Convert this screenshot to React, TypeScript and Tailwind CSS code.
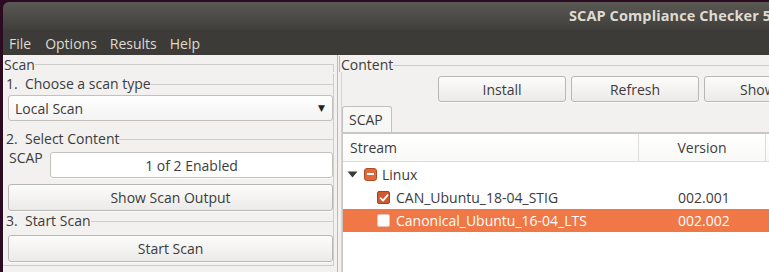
import React from 'react'

const font = { fontFamily: '"Open Sans", "DejaVu Sans", sans-serif' }

const btn =
  'flex items-center justify-center rounded-[3px] border border-[#b9b7b3] bg-gradient-to-b from-[#fcfcfb] to-[#ebeae8] text-[#3c3c3c] shadow-[0_1px_0_rgba(255,255,255,0.8)]'

function Section({ label }: { label: string }) {
  return (
    <div className="flex items-center h-[18px] pl-[3px]">
      <span className="whitespace-pre text-[#3c3c3c]">{label}</span>
      <div className="flex-1 border-t border-[#cfcdc9] mt-[2px]" />
    </div>
  )
}

function CheckOn() {
  return (
    <span className="w-[13px] h-[13px] rounded-[2px] bg-[#cf5a2f] border border-[#a8431e] flex items-center justify-center">
      <svg width="10" height="10" viewBox="0 0 10 10">
        <path d="M1.5 5.2 L4 7.6 L8.6 2.2" stroke="#fff" strokeWidth="1.8" fill="none" strokeLinecap="round" strokeLinejoin="round" />
      </svg>
    </span>
  )
}

function CheckPartial() {
  return (
    <span className="w-[13px] h-[13px] rounded-[3px] bg-[#dd6a3d] border border-[#b04a22] flex items-center justify-center">
      <span className="w-[7px] h-[2px] bg-white" />
    </span>
  )
}

function CheckOff() {
  return <span className="w-[13px] h-[13px] rounded-[2px] bg-[#fbfbfb] border border-[#e8c2b0]" />
}

export default function App() {
  return (
    <div className="w-[769px] h-[272px] flex bg-[#2c0a22] overflow-hidden text-[14px]" style={font}>
      <div className="w-[3px] shrink-0" />
      <div className="flex-1 flex flex-col mt-[2px] rounded-tl-[6px] overflow-hidden">
        {/* title bar */}
        <div className="h-[28px] shrink-0 bg-gradient-to-b from-[#5b5954] to-[#3f3e3a] flex items-center pl-[566px] whitespace-nowrap overflow-hidden">
          <span className="font-bold text-[#dfdbd2] text-[14.5px] tracking-[0.1px]">SCAP Compliance Checker 5</span>
        </div>
        {/* menu bar */}
        <div className="h-[25px] shrink-0 bg-[#3c3b37] flex items-center text-[#dfdbd2] text-[14px] pt-[1px]">
          <span className="ml-[6px]">File</span>
          <span className="ml-[14px]">Options</span>
          <span className="ml-[13px]">Results</span>
          <span className="ml-[13px]">Help</span>
        </div>
        {/* body */}
        <div className="flex-1 bg-[#f2f1f0] flex min-h-0">
          {/* left: Scan */}
          <div className="w-[331px] shrink-0 flex flex-col pt-[1px] text-[#3c3c3c]">
            <div className="flex items-center h-[18px] pl-[1px]">
              <span className="-mt-[2px]">Scan</span>
              <div className="flex-1 h-[8px] mt-[6px] border-t border-r border-[#cfcdc9]" />
            </div>
            <div className="flex flex-col border-r border-b border-[#cfcdc9] pr-0 h-[192px]">
              <Section label="1.  Choose a scan type" />
              <div className="mt-[3px] ml-[5px] h-[26px] rounded-[3px] border border-[#c3c1bd] bg-gradient-to-b from-[#ffffff] to-[#f4f3f2] flex items-center pl-[6px] pr-[7px]">
                <span className="flex-1">Local Scan</span>
                <span className="text-[9px] text-[#222]">▼</span>
              </div>
              <div className="h-[8px]" />
              <Section label="2.  Select Content" />
              <div className="flex mt-[5px] ml-[5px] h-[26px]">
                <span className="w-[42px] pl-[1px] leading-[14px] -mt-[1px]">SCAP</span>
                <div className={`${btn} flex-1 bg-none bg-white border-[#c3c1bd]`}>1 of 2 Enabled</div>
              </div>
              <div className={`${btn} mt-[6px] ml-[5px] h-[27px]`}>Show Scan Output</div>
              <Section label="3.  Start Scan" />
              <div className={`${btn} mt-[6px] ml-[5px] h-[27px]`}>Start Scan</div>
            </div>
          </div>
          {/* splitter */}
          <div className="w-[4px] shrink-0 border-r border-[#bdbbb7]" />
          {/* right: Content */}
          <div className="flex-1 flex flex-col pt-[1px] pl-[1px] text-[#3c3c3c] min-w-0">
            <div className="flex items-center h-[16px] border-l border-[#bdbbb7] pl-[1px]">
              <span>Content</span>
              <div className="flex-1 mt-[2px] border-t border-[#cfcdc9]" />
            </div>
            <div className="flex-1 flex flex-col border-l border-[#d6d4d0] ml-[2px] min-h-0">
              <div className="flex gap-[5px] pl-[96px] mt-[4px] h-[26px] whitespace-nowrap">
                <div className={`${btn} w-[128px] shrink-0`}>Install</div>
                <div className={`${btn} w-[128px] shrink-0`}>Refresh</div>
                <div className={`${btn} w-[128px] shrink-0 justify-start pl-[35px]`}>Show</div>
              </div>
              <div className="mt-[4px] h-[26px] flex">
                <div className="w-[50px] h-[26px] rounded-t-[3px] border border-b-0 border-[#c3c1bd] bg-[#f7f7f6] flex items-center pl-[6px]">
                  SCAP
                </div>
              </div>
              <div className="flex-1 bg-white border-t-2 border-l border-[#c9c7c3] flex flex-col min-h-0">
                <div className="h-[28px] flex border-b border-[#dedcd9] bg-gradient-to-b from-[#ffffff] to-[#f9f9f8] shrink-0">
                  <div className="w-[296px] border-r border-[#dedcd9] flex items-center pl-[7px]">Stream</div>
                  <div className="w-[127px] border-r border-[#dedcd9] flex items-center justify-center">Version</div>
                </div>
                <div className="h-[24px] flex items-center pl-[4px] gap-[6px]">
                  <svg width="11" height="7" viewBox="0 0 11 7">
                    <path d="M0.5 0.5 H10.5 L5.5 6.5 Z" fill="#3a3a3a" />
                  </svg>
                  <CheckPartial />
                  <span className="ml-[-1px]">Linux</span>
                </div>
                <div className="h-[23px] flex items-center">
                  <div className="w-[296px] flex items-center pl-[34px] gap-[6px]">
                    <CheckOn />
                    <span>CAN_Ubuntu_18-04_STIG</span>
                  </div>
                  <span className="pl-[39px]">002.001</span>
                </div>
                <div className="h-[23px] flex items-center bg-[#f07746] text-white">
                  <div className="w-[296px] flex items-center pl-[34px] gap-[6px]">
                    <CheckOff />
                    <span>Canonical_Ubuntu_16-04_LTS</span>
                  </div>
                  <span className="pl-[39px]">002.002</span>
                </div>
              </div>
            </div>
          </div>
        </div>
      </div>
    </div>
  )
}
